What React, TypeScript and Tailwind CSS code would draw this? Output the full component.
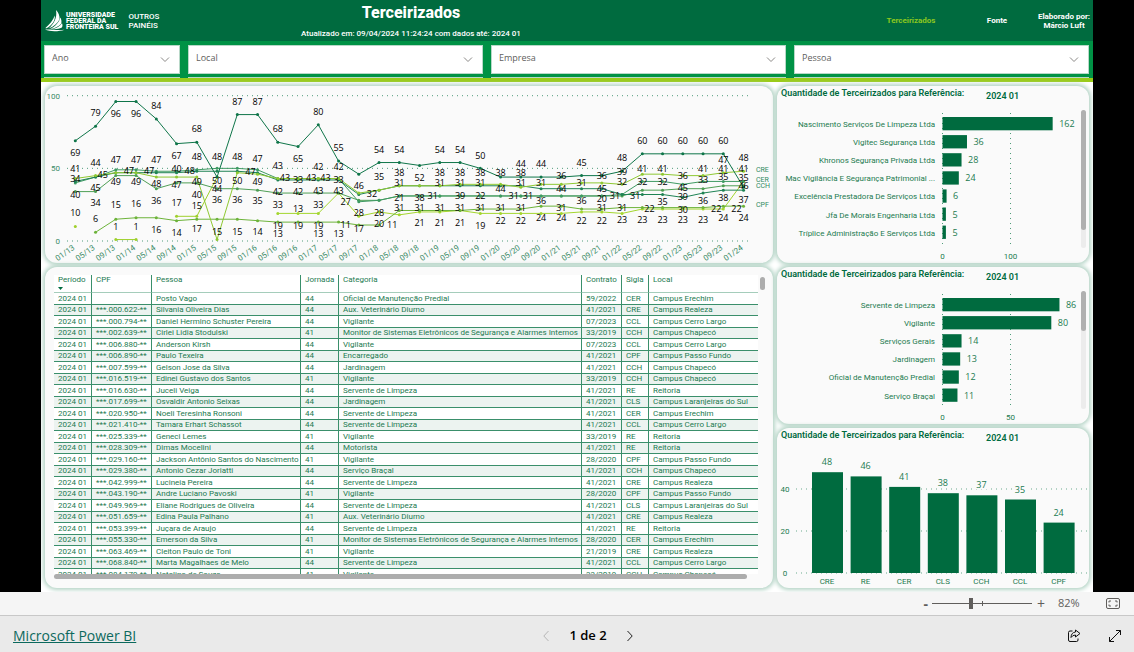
import { useState } from 'react'

type Series = { color: string; start: number; values: number[] }
type Bar = { label: string; value: number }

const FILTERS = ['Ano', 'Local', 'Empresa', 'Pessoa']

const MONTHS = [
  '01/13', '05/13', '09/13', '01/14', '05/14', '09/14', '01/15', '05/15', '09/15', '01/16', '05/16', '09/16',
  '01/17', '05/17', '09/17', '01/18', '05/18', '09/18', '01/19', '05/19', '09/19', '01/20', '05/20', '09/20',
  '01/21', '05/21', '09/21', '01/22', '05/22', '09/22', '01/23', '05/23', '09/23', '01/24'
]

const SERIES: Series[] = [
  { color: '#9fd02c', start: 0, values: [10] },
  { color: '#9fd02c', start: 2, values: [1, 1] },
  { color: '#9fd02c', start: 5, values: [17, 17, 44] },
  {
    color: '#a4d62e',
    start: 10,
    values: [19, 19, 19, 33, 17, 20, 18, 20, 20, 21, 19, 19, 19, 19, 19, 20, 20, 19, 22, 22, 22, 22, 22, 41]
  },
  {
    color: '#6db33a',
    start: 1,
    values: [6, 15, 16, 16, 14, 15, 15, 15, 14, 13, 13, 13, 13, 11, 11, 21, 21, 21, 21, 22, 22, 22, 24, 24, 22, 22, 23, 23, 23, 23, 23, 24, 24]
  },
  {
    color: '#4f9f55',
    start: 0,
    values: [34, 34, 45, 45, 36, 40, 40, 36, 36, 35, 33, 33, 33, 33, 28, 28, 31, 31, 31, 31, 31, 31, 31, 31, 31, 31, 31, 31, 35, 35, 36, 36, 38, 38]
  },
  {
    color: '#3f9a63',
    start: 0,
    values: [40, 44, 49, 49, 48, 48, 49, 50, 50, 49, 43, 43, 43, 43, 27, 28, 31, 31, 31, 31, 31, 31, 31, 31, 31, 31, 31, 32, 41, 41, 39, 41, 41, 41]
  },
  {
    color: '#1f8354',
    start: 0,
    values: [41, 44, 47, 47, 47, 47, 48, 48, 48, 47, 42, 42, 42, 42, 32, 35, 38, 38, 38, 38, 38, 38, 38, 36, 36, 36, 36, 32, 32, 32, 30, 33, 35, 35]
  },
  {
    color: '#8fc832',
    start: 0,
    values: [43, 45, 47, 47, 44, 44, 44, 1, 47, 46, 43, 43, 43, 43, 33, 35, 38, 38, 38, 39, 39, 39, 37, 39, 39, 40, 40, 39, 46, 46, 45, 45, 47, 48]
  },
  {
    color: '#0f7549',
    start: 0,
    values: [69, 79, 96, 96, 84, 67, 68, 44, 87, 87, 68, 65, 80, 55, 46, 54, 54, 52, 54, 54, 50, 44, 44, 44, 44, 45, 45, 48, 60, 60, 60, 60, 60, 37]
  }
]

// [month index, y, value] of every data label
const POINT_LABELS: [number, number, number][] = [
  [0, 67, 69], [0, 83, 41], [0, 93, 34], [0, 109, 40], [0, 127, 10],
  [1, 27, 79], [1, 77, 44], [1.35, 89, 45], [1, 102, 45], [1, 117, 34], [1, 133, 6],
  [2, 28, 96], [2, 74, 47], [2.65, 85, 47], [2, 96, 49], [2, 119, 15], [2, 141, 1],
  [3, 28, 96], [3, 74, 47], [3.65, 85, 47], [3, 96, 49], [3, 118, 16], [3, 141, 1],
  [4, 20, 84], [4, 74, 47], [4, 98, 48], [4, 115, 36], [4, 144, 16],
  [5, 70, 67], [5, 83, 40], [5.65, 85, 48], [5, 99, 47], [5, 117, 17], [5, 147, 14],
  [6, 43, 68], [6, 71, 48], [6, 96, 49], [6, 109, 40], [6, 120, 15], [6, 143, 17],
  [7, 71, 48], [7, 95, 50], [7, 103, 44], [7, 114, 36], [7, 146, 15],
  [8, 16, 87], [8, 71, 48], [8, 95, 50], [8, 114, 36], [8, 146, 15],
  [9, 16, 87], [9, 73, 47], [8.65, 86, 47], [9, 96, 49], [9, 115, 35], [9, 146, 14],
  [10, 43, 68], [10, 80, 43], [10.35, 92, 43], [10, 106, 42], [10, 119, 33], [10, 140, 19], [10, 148, 13],
  [11, 73, 65], [11, 94, 33], [11.65, 92, 43], [11, 106, 42], [11, 123, 13], [11, 140, 19],
  [12, 26, 80], [12, 81, 42], [12.35, 92, 43], [12, 105, 43], [12, 119, 33], [12, 140, 19], [12, 148, 13],
  [13, 62, 55], [13, 81, 42], [13, 94, 33], [13, 105, 43], [13.35, 116, 27], [13.35, 139, 11], [13, 148, 13],
  [14, 100, 46], [14.65, 108, 32], [14, 127, 28], [14, 143, 17],
  [15, 64, 54], [15, 91, 35], [15, 127, 28], [15, 138, 20], [15.65, 139, 11],
  [16, 64, 54], [16, 87, 38], [16, 97, 31], [16, 112, 21], [16, 122, 31],
  [17, 92, 52], [17, 112, 38], [17.65, 110, 31], [17, 122, 31], [17, 137, 21],
  [18, 64, 54], [18, 87, 38], [18, 97, 31], [18, 122, 31], [18, 137, 21],
  [19, 64, 54], [19, 87, 38], [19, 97, 31], [19, 110, 39], [19, 122, 31], [19, 137, 21],
  [20, 70, 50], [20, 87, 38], [20, 97, 31], [20, 110, 22], [20, 122, 31], [20, 140, 19],
  [21, 87, 38], [21, 103, 44], [21.65, 110, 31], [21, 122, 31], [21, 135, 22],
  [22, 78, 44], [22, 87, 38], [22, 97, 31], [22.35, 110, 31], [22, 122, 31], [22, 135, 22],
  [23, 78, 44], [23, 97, 31], [23, 115, 36], [23, 132, 24],
  [24, 90, 36], [24, 103, 44], [24, 122, 31], [24, 132, 24],
  [25, 77, 45], [25, 97, 31], [25, 115, 36], [25, 135, 22],
  [26, 90, 36], [26, 103, 45], [26, 113, 20], [26.65, 110, 31], [26, 122, 31], [26, 135, 22],
  [27, 72, 48], [27, 86, 39], [27, 96, 32], [27.65, 110, 31], [27, 122, 31], [27, 134, 23],
  [28, 55, 60], [28, 83, 41], [28, 96, 32], [28.35, 123, 22], [28, 134, 23],
  [29, 55, 60], [29, 83, 41], [29, 96, 32], [29, 116, 35], [29, 134, 23],
  [30, 55, 60], [30, 90, 36], [30, 102, 45], [30, 111, 39], [30, 124, 30], [30, 134, 23],
  [31, 55, 60], [31, 83, 41], [31, 94, 33], [31, 115, 36], [31.65, 123, 22], [31, 134, 23],
  [32, 55, 60], [32, 74, 47], [32, 83, 41], [32, 91, 35], [32, 112, 38], [32.65, 123, 22], [32, 132, 24],
  [33, 72, 48], [33, 83, 41], [33, 92, 35], [33, 100, 46], [33, 114, 37], [33, 132, 24]
]

const COMPANIES: Bar[] = [
  { label: 'Nascimento Serviços De Limpeza Ltda', value: 162 },
  { label: 'Vigitec Segurança Ltda', value: 36 },
  { label: 'Khronos Segurança Privada Ltda', value: 28 },
  { label: 'Mac Vigilância E Segurança Patrimonial ...', value: 24 },
  { label: 'Excelência Prestadora De Serviços Ltda', value: 6 },
  { label: 'Jfa De Morais Engenharia Ltda', value: 5 },
  { label: 'Tríplice Administração E Serviços Ltda', value: 5 }
]

const CATEGORIES: Bar[] = [
  { label: 'Servente de Limpeza', value: 86 },
  { label: 'Vigilante', value: 80 },
  { label: 'Serviços Gerais', value: 14 },
  { label: 'Jardinagem', value: 13 },
  { label: 'Oficial de Manutenção Predial', value: 12 },
  { label: 'Serviço Braçal', value: 11 }
]

const CAMPUSES: Bar[] = [
  { label: 'CRE', value: 48 },
  { label: 'RE', value: 46 },
  { label: 'CER', value: 41 },
  { label: 'CLS', value: 38 },
  { label: 'CCH', value: 37 },
  { label: 'CCL', value: 35 },
  { label: 'CPF', value: 24 }
]

const LOCATIONS: Record<string, string> = {
  CER: 'Campus Erechim',
  CRE: 'Campus Realeza',
  CCL: 'Campus Cerro Largo',
  CCH: 'Campus Chapecó',
  CPF: 'Campus Passo Fundo',
  CLS: 'Campus Laranjeiras do Sul',
  RE: 'Reitoria'
}

const COLUMNS = [
  { label: 'Período', width: 'w-[38px]' },
  { label: 'CPF', width: 'w-[60px]' },
  { label: 'Pessoa', width: 'w-[149px]' },
  { label: 'Jornada', width: 'w-[38px]' },
  { label: 'Categoria', width: 'w-[243px]' },
  { label: 'Contrato', width: 'w-[40px]' },
  { label: 'Sigla', width: 'w-[27px]' },
  { label: 'Local', width: '' }
]

const MONITOR = 'Monitor de Sistemas Eletrônicos de Segurança e Alarmes Internos'

// cpf, pessoa, jornada, categoria, contrato, sigla
const ROWS = [
  ['', 'Posto Vago', '44', 'Oficial de Manutenção Predial', '59/2022', 'CER'],
  ['***.000.622-**', 'Silvania Oliveira Dias', '44', 'Aux. Veterinário Diurno', '41/2021', 'CRE'],
  ['***.000.794-**', 'Daniel Hermino Schuster Pereira', '44', 'Vigilante', '07/2023', 'CCL'],
  ['***.002.639-**', 'Cirlei Lidia Stodulski', '41', MONITOR, '33/2019', 'CCH'],
  ['***.006.880-**', 'Anderson Kirsh', '44', 'Vigilante', '07/2023', 'CCL'],
  ['***.006.890-**', 'Paulo Texeira', '44', 'Encarregado', '41/2021', 'CPF'],
  ['***.007.599-**', 'Gelson Jose da Silva', '44', 'Jardinagem', '41/2021', 'CCH'],
  ['***.016.519-**', 'Edinei Gustavo dos Santos', '41', 'Vigilante', '33/2019', 'CCH'],
  ['***.016.630-**', 'Juceli Veiga', '44', 'Servente de Limpeza', '41/2021', 'RE'],
  ['***.017.699-**', 'Osvaldir Antonio Seixas', '44', 'Jardinagem', '41/2021', 'CLS'],
  ['***.020.950-**', 'Noeli Teresinha Ronsoni', '44', 'Servente de Limpeza', '41/2021', 'CER'],
  ['***.021.410-**', 'Tamara Erhart Schassot', '44', 'Servente de Limpeza', '41/2021', 'CCL'],
  ['***.025.339-**', 'Geneci Lemes', '41', 'Vigilante', '33/2019', 'RE'],
  ['***.028.309-**', 'Dimas Mocelini', '44', 'Motorista', '41/2021', 'RE'],
  ['***.029.160-**', 'Jackson Antônio Santos do Nascimento', '41', 'Vigilante', '28/2020', 'CPF'],
  ['***.029.380-**', 'Antonio Cezar Joriatti', '44', 'Serviço Braçal', '41/2021', 'CCH'],
  ['***.042.999-**', 'Lucineia Pereira', '44', 'Servente de Limpeza', '41/2021', 'CRE'],
  ['***.043.190-**', 'Andre Luciano Pavoski', '41', 'Vigilante', '28/2020', 'CPF'],
  ['***.049.969-**', 'Eliane Rodrigues de Oliveira', '44', 'Servente de Limpeza', '41/2021', 'CLS'],
  ['***.051.659-**', 'Edina Paula Palhano', '41', 'Aux. Veterinário Diurno', '41/2021', 'CRE'],
  ['***.053.399-**', 'Juçara de Araujo', '44', 'Servente de Limpeza', '41/2021', 'RE'],
  ['***.055.330-**', 'Emerson da Silva', '41', MONITOR, '28/2020', 'CER'],
  ['***.063.469-**', 'Cleiton Paulo de Toni', '41', 'Vigilante', '21/2019', 'CRE'],
  ['***.068.840-**', 'Marta Magalhaes de Melo', '44', 'Servente de Limpeza', '41/2021', 'CCL'],
  ['***.084.179-**', 'Natalino de Souza', '41', 'Vigilante', '33/2019', 'CCH']
]

const CARD = 'min-w-0 overflow-hidden rounded-xl bg-[#fafafa] shadow-[0_0_4px_2px_#b3d3c5]'

function Logo() {
  return (
    <div className="flex items-center gap-px">
      <svg viewBox="0 0 20 22" className="h-[22px] w-5" fill="#fff">
        <path d="M11 0C13.500 2.500 14.800 6 14.600 9.300 12.500 13.500 8.500 16.800 3.500 18.600 8.500 14.500 12.500 8 11 0Z" />
        <path d="M15.300 7.500C16.500 9.500 16.800 11.800 16.200 13.800 13.300 16.900 9.500 18.600 5.200 19 10 16.700 14 12.700 15.300 7.500Z" />
        <path d="M17 13.200C17.700 14.800 17.600 16.200 16.900 17.600 14 19.100 10.500 19.500 7.500 19.200 11.500 18.200 15 16.200 17 13.200Z" />
        <path d="M9.800 5.500C10.500 10.500 7 15.500 1.500 18.300 .6 18.500.3 18 .9 17.400 4.500 14.500 8 10.500 9.800 5.500Z" />
        <path d="M0 19.600C6 19.200 12 20.600 19.500 19.700 14 21.600 5 21.800 0 19.600Z" />
      </svg>
      <div className="text-[7px] leading-[6px] font-black">
        UNIVERSIDADE
        <br />
        FEDERAL DA
        <br />
        FRONTEIRA SUL
      </div>
    </div>
  )
}

function Header() {
  return (
    <header className="flex h-[41px] items-center bg-[#006b3f] font-['Roboto',sans-serif] text-[8px] leading-[9px] font-bold text-white">
      <div className="flex w-[229px] items-center gap-2.5 pl-1">
        <Logo />
        <a href="#paineis" className="font-medium">
          OUTROS
          <br />
          PAINÉIS
        </a>
      </div>
      <div className="flex w-[282px] flex-col items-center gap-1.5">
        <h1 className="text-base leading-5 font-extrabold">Terceirizados</h1>
        <p className="font-medium">Atualizado em: 09/04/2024 11:24:24 com dados até: 2024 01</p>
      </div>
      <nav className="ml-auto flex items-center text-center">
        <a href="#terceirizados" className="w-24 text-[#8cc81e]">
          Terceirizados
        </a>
        <a href="#fonte" className="w-[76px]">
          Fonte
        </a>
        <p className="w-[58px]">
          Elaborado por:
          <br />
          Márcio Luft
        </p>
      </nav>
    </header>
  )
}

function Filters() {
  return (
    <div className="grid grid-cols-[136fr_295fr_295fr_295fr] gap-2 border-b-4 border-[#9acb19] bg-[#009245] pt-1 pr-1 pl-[3px]">
      {FILTERS.map((name) => (
        <div key={name} className="flex flex-col gap-[3px]">
          <div className="relative">
            <select
              aria-label={name}
              className="block h-[29px] w-full appearance-none border border-[#b8d8c8] bg-white pb-1 pl-[7px] font-['Open_Sans',sans-serif] text-[9px] text-[#605e5c]"
            >
              <option>{name}</option>
            </select>
            <svg viewBox="0 0 10 6" className="pointer-events-none absolute top-3 right-2.5 h-1.5 w-2.5" fill="none" stroke="#8a8886">
              <path d="M1 .5 5 4.500 9 .5" />
            </svg>
          </div>
          <div className="h-px bg-[#b8d8c8]" />
        </div>
      ))}
    </div>
  )
}

const monthX = (i: number) => 30.3 + 20.25 * i
const valueY = (v: number) => 155 - 1.453 * v

function LineChart() {
  return (
    <section className={CARD}>
      <svg viewBox="0 0 728 177" className="block w-full font-['Roboto',sans-serif] text-[8px]" role="img" aria-label="Terceirizados por campus">
        {[0, 50, 100].map((v) => (
          <g key={v}>
            <line x1="22" x2="705" y1={valueY(v)} y2={valueY(v)} stroke="#4f9c7a" strokeDasharray="1 4" />
            <text x="15" y={valueY(v) + 3} textAnchor="end" fill="#3a8b67">
              {v}
            </text>
          </g>
        ))}
        {SERIES.map((s, n) => (
          <g key={n}>
            <polyline
              points={s.values.map((v, i) => `${monthX(s.start + i)},${valueY(v)}`).join(' ')}
              fill="none"
              stroke={s.color}
            />
            {s.values.map((v, i) => (
              <circle key={i} cx={monthX(s.start + i)} cy={valueY(v)} r="1.5" fill={s.color} />
            ))}
          </g>
        ))}
        {MONTHS.map((m, i) => (
          <text key={m} textAnchor="end" fill="#3a8b67" transform={`translate(${monthX(i)} 163) rotate(-35)`}>
            {m}
          </text>
        ))}
        <g className="font-['Open_Sans',sans-serif] text-[9px] font-medium" textAnchor="middle" fill="#000">
          {POINT_LABELS.map(([i, y, v], n) => (
            <text key={n} x={monthX(i)} y={y + 3}>
              {v}
            </text>
          ))}
        </g>
        <g className="text-[7px]" fill="#2f8a5f">
          <text x="711" y="86">CRE</text>
          <text x="711" y="96">CER</text>
          <text x="711" y="102">CCH</text>
          <text x="711" y="121">CPF</text>
        </g>
      </svg>
    </section>
  )
}

function PeopleTable() {
  return (
    <section className={`${CARD} flex-1 pt-2 pr-2 pl-[9px]`}>
      <div className="flex gap-0.5">
        <div className="h-[299px] min-w-0 flex-1 overflow-hidden">
          <table className="w-full table-fixed border-separate border-spacing-0 text-left font-['Roboto',sans-serif] text-[8px] leading-[10px] whitespace-nowrap text-[#1c7a50]">
            <thead>
              <tr className="bg-white">
                {COLUMNS.map((c, i) => (
                  <th
                    key={c.label}
                    className={`h-[17px] border-r border-b border-[#3a8f6b] border-b-[#a5cdbb] pl-1 align-top font-normal last:border-r-0 ${c.width}`}
                  >
                    {c.label}
                    <svg viewBox="0 0 5 3" className="mt-0.5 h-[3px] w-[5px]" fill={i === 0 ? '#006b3f' : 'none'}>
                      <path d="M0 0h5L2.500 3Z" />
                    </svg>
                    <div className="h-0.5" />
                  </th>
                ))}
              </tr>
            </thead>
            <tbody>
              {ROWS.map((row, i) => (
                <tr key={i} className="h-3 bg-white even:h-[11px] even:bg-[#ecf3f0]">
                  {['2024 01', ...row, LOCATIONS[row[5]]].map((cell, j) => (
                    <td key={j} className="border-r border-b border-[#3a8f6b] p-0 pl-1 last:border-r-0">
                      {cell}
                    </td>
                  ))}
                </tr>
              ))}
            </tbody>
          </table>
        </div>
        <div className="w-[5px]">
          <div className="mt-0.5 h-[13px] rounded-full bg-[#adadad]" />
        </div>
      </div>
      <div className="mr-[18px] h-[5px] rounded-full bg-[#adadad]" />
    </section>
  )
}

function CardTitle() {
  return (
    <div className="flex h-5 items-center pl-1 font-['Roboto',sans-serif] text-[9px] font-semibold text-[#006b3f]">
      <h2 className="w-[205px] pb-1">Quantidade de Terceirizados para Referência:</h2>
      <span className="pt-0.5">2024 01</span>
    </div>
  )
}

type HorizontalBarsProps = { data: Bar[]; tick: number; height: number; top: number; thumb: number }

function HorizontalBars({ data, tick, height, top, thumb }: HorizontalBarsProps) {
  const unit = 68 / tick
  const bottom = height - 15
  return (
    <section className={CARD}>
      <CardTitle />
      <svg viewBox={`0 0 312 ${height}`} className="block w-full font-['Roboto',sans-serif] text-[8px]" fill="#1c7a50">
        {[0, tick].map((v) => (
          <g key={v}>
            <line x1={165.5 + v * unit} x2={165.5 + v * unit} y1={top - 4} y2={bottom} stroke="#4f9c7a" strokeDasharray="1 4" />
            <text x={165.5 + v * unit} y={height - 4} textAnchor="middle">
              {v}
            </text>
          </g>
        ))}
        {data.map((d, i) => (
          <g key={d.label}>
            <text x="158" y={top + 10 + i * 18.1} textAnchor="end">
              {d.label}
            </text>
            <rect x="165.5" y={top + i * 18.1} width={d.value * unit} height="13.3" fill="#006b3f" />
            <text x={172 + d.value * unit} y={top + 10 + i * 18.1} className="font-['Open_Sans',sans-serif] text-[9px]">
              {d.value}
            </text>
          </g>
        ))}
        <rect x="304" y="4" width="5" height={bottom - 4} rx="2.5" fill="#ececec" />
        <rect x="304" y="4" width="5" height={thumb} rx="2.5" fill="#b0b0b0" />
      </svg>
    </section>
  )
}

function CampusBars() {
  const y = (v: number) => 125 - v * 2.1
  return (
    <section className={CARD}>
      <CardTitle />
      <svg viewBox="0 0 312 140" className="block w-full font-['Roboto',sans-serif] text-[8px]" textAnchor="middle" fill="#1c7a50">
        {[0, 20, 40].map((v) => (
          <g key={v}>
            <line x1="19" x2="312" y1={y(v)} y2={y(v)} stroke="#6aab8e" strokeDasharray="1 4" />
            <text x="8" y={y(v) + 3}>
              {v}
            </text>
          </g>
        ))}
        {CAMPUSES.map((d, i) => (
          <g key={d.label} transform={`translate(${35 + i * 38.6} 0)`}>
            <rect y={y(d.value)} width="31" height={d.value * 2.1} fill="#006b3f" />
            <rect x="9" y={y(d.value) - 15} width="13" height="9" fill="#fafafa" />
            <text x="15" y={y(d.value) - 7} className="font-['Open_Sans',sans-serif] text-[9px]">
              {d.value}
            </text>
            <text x="15" y="136">
              {d.label}
            </text>
          </g>
        ))}
      </svg>
    </section>
  )
}

function ZoomBar() {
  const [zoom, setZoom] = useState(82)
  return (
    <div className="flex h-6 items-center justify-end border-b border-[#c8c8c8] bg-[#f5f5f5] pr-3.5 font-['Open_Sans',sans-serif] text-[11px] text-[#605e5c]">
      <button aria-label="Reduzir" className="px-1 text-sm leading-none font-bold" onClick={() => setZoom(zoom - 5)}>
        -
      </button>
      <div className="relative flex items-center">
        <input
          type="range"
          aria-label="Zoom"
          min="10"
          max="195"
          value={zoom}
          onChange={(e) => setZoom(Number(e.target.value))}
          className="h-3 w-[100px] appearance-none bg-transparent [&::-webkit-slider-runnable-track]:h-px [&::-webkit-slider-runnable-track]:bg-[#605e5c] [&::-webkit-slider-thumb]:-mt-[5px] [&::-webkit-slider-thumb]:h-[11px] [&::-webkit-slider-thumb]:w-1 [&::-webkit-slider-thumb]:appearance-none [&::-webkit-slider-thumb]:bg-[#605e5c]"
        />
        <span className="pointer-events-none absolute left-1/2 h-[5px] w-px bg-[#605e5c]" />
      </div>
      <button aria-label="Ampliar" className="px-[5px] text-sm leading-none" onClick={() => setZoom(zoom + 5)}>
        +
      </button>
      <span className="w-14 pl-2">{zoom}%</span>
      <button aria-label="Ajustar à página">
        <svg viewBox="0 0 14 11" className="h-[11px] w-3.5" fill="none" stroke="#605e5c">
          <rect x=".5" y=".5" width="13" height="10" rx="1.500" />
          <path d="M3 4.500V3h2M9 3h2v1.500M11 6.500V8H9M5 8H3V6.500" />
        </svg>
      </button>
    </div>
  )
}

function Footer() {
  return (
    <footer className="grid h-9 grid-cols-[1fr_auto_1fr] items-center bg-[#eaeaea] px-[13px] pb-px pt-1 font-['Open_Sans',sans-serif] text-[13px] text-black">
      <a href="#powerbi" className="justify-self-start text-sm text-[#0c695d] underline">
        Microsoft Power BI
      </a>
      <div className="ml-[42px] flex items-center gap-5">
        <button aria-label="Página anterior" disabled>
          <svg viewBox="0 0 6 12" className="h-3 w-1.5" fill="none" stroke="#b5b5b5">
            <path d="M5.500 1 .8 6l4.700 5" />
          </svg>
        </button>
        <span className="font-semibold">1 de 2</span>
        <button aria-label="Próxima página">
          <svg viewBox="0 0 6 12" className="h-3 w-1.5" fill="none" stroke="#222">
            <path d="M.5 1 5.200 6 .5 11" />
          </svg>
        </button>
      </div>
      <div className="flex items-center gap-7 justify-self-end">
        <button aria-label="Compartilhar">
          <svg viewBox="0 0 14 14" className="h-3.5 w-3.5" fill="none" stroke="#111" strokeLinejoin="round">
            <path d="M5.500 2H3Q1.500 2 1.500 3.500V11Q1.500 12.500 3 12.500H9.500Q11 12.500 11 11V9.500" />
            <path d="M8.500 1 13 4.500 8.500 8V6Q5.500 6 4 8.500 4.200 3.500 8.500 3Z" />
          </svg>
        </button>
        <button aria-label="Tela cheia">
          <svg viewBox="0 0 12 12" className="h-3 w-3" fill="none" stroke="#111">
            <path d="M7 .5h4.500V5M11.500.5l-11 11M.5 7v4.500H5" />
          </svg>
        </button>
      </div>
    </footer>
  )
}

export default function App() {
  return (
    <div className="bg-black">
      <div className="mx-auto max-w-[1052px] overflow-hidden bg-white">
        <Header />
        <Filters />
        <main className="grid grid-cols-[7fr_3fr] gap-1 p-1">
          <div className="flex min-w-0 flex-col gap-1">
            <LineChart />
            <PeopleTable />
          </div>
          <div className="flex min-w-0 flex-col gap-1">
            <HorizontalBars data={COMPANIES} tick={100} height={157} top={11} thumb={120} />
            <HorizontalBars data={CATEGORIES} tick={50} height={137} top={11} thumb={40} />
            <CampusBars />
          </div>
        </main>
      </div>
      <ZoomBar />
      <Footer />
    </div>
  )
}
